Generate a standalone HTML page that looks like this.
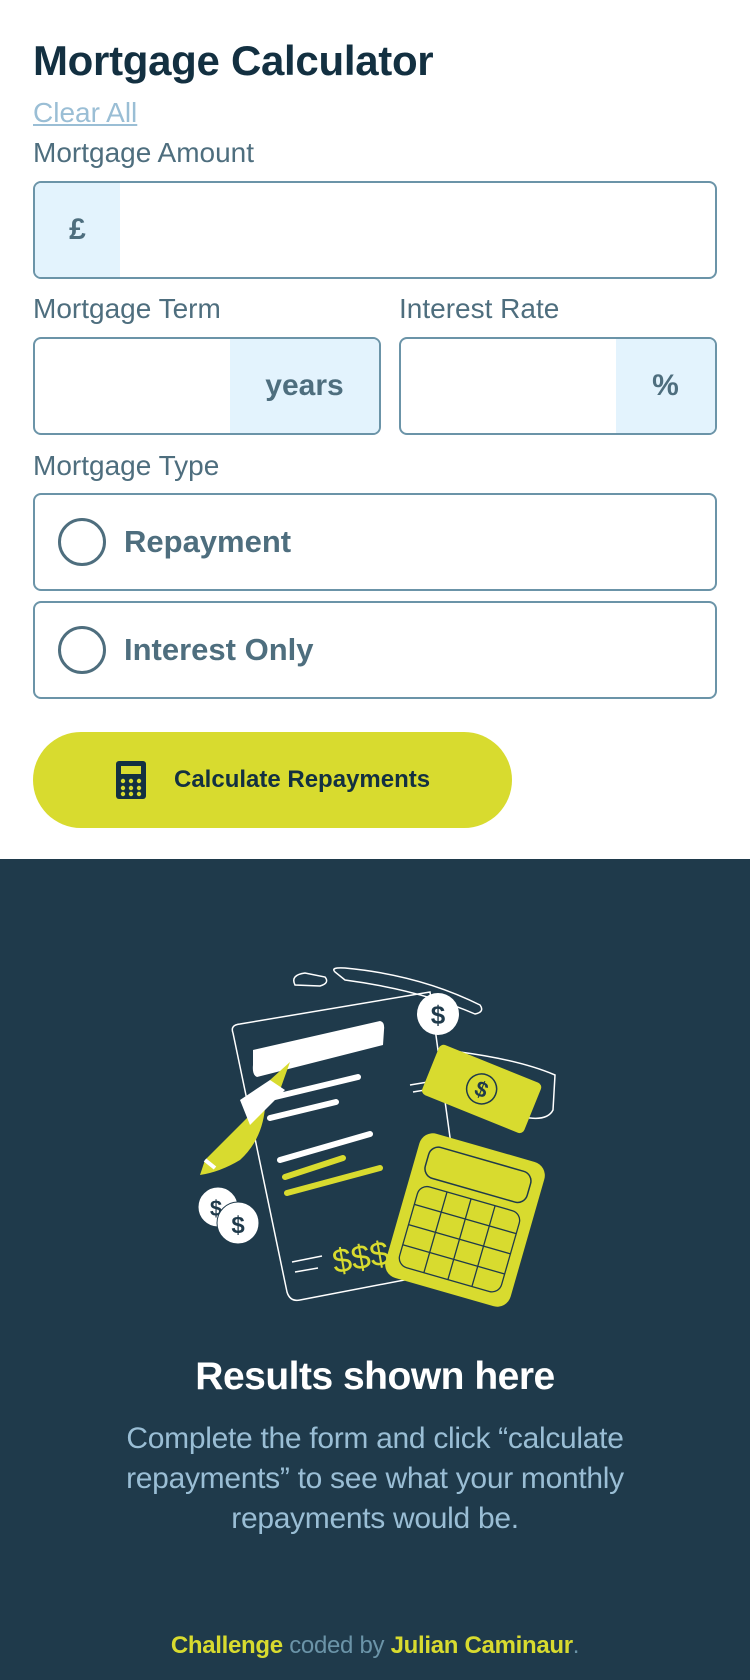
<!DOCTYPE html>
<html><head><meta charset="utf-8"><style>
*{box-sizing:border-box;margin:0;padding:0}
body{width:750px;height:1680px;background:#fff;font-family:"Liberation Sans",sans-serif;position:relative;overflow:hidden}
.a{position:absolute}
.lbl{color:#4e6e7e;font-size:28px;letter-spacing:0}
.box{border:2px solid #6b94a8;border-radius:8px;overflow:hidden}
.aff{position:absolute;top:0;bottom:0;background:#e3f3fd;color:#4e6e7e;font-weight:bold;font-size:30px;display:flex;align-items:center;justify-content:center}
.radio{display:flex;align-items:center}
.radio .c{width:48px;height:48px;border:3px solid #4e6e7e;border-radius:50%;margin-left:23px;margin-right:18px}
.radio span{font-size:31px;font-weight:bold;color:#4e6e7e;letter-spacing:0}
</style></head><body>
<div class="a" style="left:33px;top:37px;font-size:42px;font-weight:bold;color:#133041;letter-spacing:-0.3px">Mortgage Calculator</div>
<div class="a" style="left:33px;top:97px;font-size:28px;color:#9abed5;text-decoration:underline">Clear All</div>
<div class="a lbl" style="left:33px;top:137px">Mortgage Amount</div>
<div class="a box" style="left:33px;top:181px;width:684px;height:98px"><div class="aff" style="left:0;width:85px">£</div></div>
<div class="a lbl" style="left:33px;top:293px">Mortgage Term</div>
<div class="a lbl" style="left:399px;top:293px">Interest Rate</div>
<div class="a box" style="left:33px;top:337px;width:348px;height:98px"><div class="aff" style="right:0;width:149px">years</div></div>
<div class="a box" style="left:399px;top:337px;width:318px;height:98px"><div class="aff" style="right:0;width:99px">%</div></div>
<div class="a lbl" style="left:33px;top:450px">Mortgage Type</div>
<div class="a box radio" style="left:33px;top:493px;width:684px;height:98px"><div class="c"></div><span>Repayment</span></div>
<div class="a box radio" style="left:33px;top:601px;width:684px;height:98px"><div class="c"></div><span>Interest Only</span></div>
<div class="a" style="left:33px;top:732px;width:479px;height:96px;border-radius:48px;background:#d8db2f;display:flex;align-items:center">
<svg width="34" height="40" viewBox="0 0 34 40" style="margin-left:81px;margin-right:26px"><rect x="2" y="1" width="30" height="38" rx="3" fill="#133041"/><rect x="7" y="6" width="20" height="8" fill="#d8db2f"/><g fill="#d8db2f"><circle cx="9" cy="21" r="2.2"/><circle cx="17" cy="21" r="2.2"/><circle cx="25" cy="21" r="2.2"/><circle cx="9" cy="28" r="2.2"/><circle cx="17" cy="28" r="2.2"/><circle cx="25" cy="28" r="2.2"/><circle cx="9" cy="34" r="2.2"/><circle cx="17" cy="34" r="2.2"/><circle cx="25" cy="34" r="2.2"/></g></svg>
<span style="font-size:24px;font-weight:bold;color:#133041">Calculate Repayments</span></div>

<div class="a" style="left:0;top:859px;width:750px;height:821px;background:#1f3a4b"></div>
<svg class="a" style="left:150px;top:940px" width="450" height="380" viewBox="150 940 450 380">
<g fill="none" stroke="#fff" stroke-width="1.5">
<path d="M233 1033 Q230 1025 240 1024 L430 992 L460 1210 M420 1277 L300 1300 Q290 1302 287 1292 L233 1033"/>
<path d="M295 985 Q290 975 305 973 L325 977 Q330 983 320 986 Z"/>
<path d="M335 972 Q330 967 345 968 Q420 975 480 1005 Q485 1012 475 1014 Q420 990 345 980 Z"/>
<path d="M460 1052 Q520 1060 555 1075 L553 1110 Q548 1120 530 1118 L500 1115"/>
<path d="M410 1085 L428 1082 M413 1092 L425 1090 M422 1140 L440 1137 M425 1148 L437 1146"/>
<path d="M292 1262 L322 1256 M295 1272 L318 1268"/>
</g>
<path d="M253 1050 L380 1021 Q385 1022 384 1030 L383 1045 L257 1077 Q252 1075 253 1065 Z" fill="#fff"/>
<g stroke="#fff" stroke-width="6" stroke-linecap="round" fill="none"><path d="M275 1097 L358 1077 M270 1118 L336 1102 M280 1160 L370 1134"/></g>
<g stroke="#d8db2f" stroke-width="6" stroke-linecap="round" fill="none"><path d="M285 1177 L343 1158 M287 1193 L380 1168"/></g>
<path d="M200 1175 L205 1160 L255 1110 L270 1080 L290 1062 L280 1090 L265 1108 Q262 1140 240 1160 Q220 1172 200 1175Z" fill="#d8db2f"/>
<path d="M240 1100 L270 1080 L285 1090 L265 1110 L250 1125 Z" fill="#fff"/>
<path d="M205 1160 L215 1168" stroke="#fff" stroke-width="4"/>
<circle cx="438" cy="1014" r="21" fill="#fff"/>
<text x="438" y="1024" font-size="26" font-weight="bold" fill="#1f3a4b" text-anchor="middle">$</text>
<g transform="rotate(22 482 1088)"><rect x="427" y="1062" width="110" height="54" rx="5" fill="#d8db2f"/><circle cx="482" cy="1089" r="15" fill="none" stroke="#1f3a4b" stroke-width="1.5"/><text x="482" y="1097" font-size="22" font-weight="bold" fill="#1f3a4b" text-anchor="middle">$</text></g>
<g transform="rotate(16 465 1220)"><rect x="400" y="1145" width="130" height="150" rx="14" fill="#d8db2f"/><rect x="412" y="1157" width="106" height="32" rx="10" fill="none" stroke="#1f3a4b" stroke-width="1.5"/><rect x="412" y="1198" width="106" height="84" rx="10" fill="none" stroke="#1f3a4b" stroke-width="1.3"/><path d="M440 1198 V1282 M465 1198 V1282 M490 1198 V1282 M412 1219 H518 M412 1240 H518 M412 1261 H518" stroke="#1f3a4b" stroke-width="1.3"/></g>
<circle cx="218" cy="1207" r="20" fill="#fff" stroke="#1f3a4b"/>
<text x="216" y="1216" font-size="22" font-weight="bold" fill="#1f3a4b" text-anchor="middle">$</text>
<circle cx="238" cy="1223" r="21" fill="#fff" stroke="#1f3a4b"/>
<text x="238" y="1233" font-size="24" font-weight="bold" fill="#1f3a4b" text-anchor="middle">$</text>
<text x="332" y="1268" font-size="34" fill="#d8db2f" transform="rotate(-10 365 1255)">$$$</text>
</svg>
<div class="a" style="left:0;width:750px;top:1355px;text-align:center;font-size:39px;font-weight:bold;color:#fff;letter-spacing:-0.5px">Results shown here</div>
<div class="a" style="left:65px;width:620px;top:1419px;text-align:center;font-size:30px;line-height:40px;color:#9abed5;letter-spacing:-0.3px">Complete the form and click “calculate repayments” to see what your monthly repayments would be.</div>
<div class="a" style="left:0;width:750px;top:1632px;text-align:center;font-size:24px;color:#6b94a8;letter-spacing:-0.3px"><b style="color:#d8db2f">Challenge</b> coded by <b style="color:#d8db2f">Julian Caminaur</b>.</div>
</body></html>
